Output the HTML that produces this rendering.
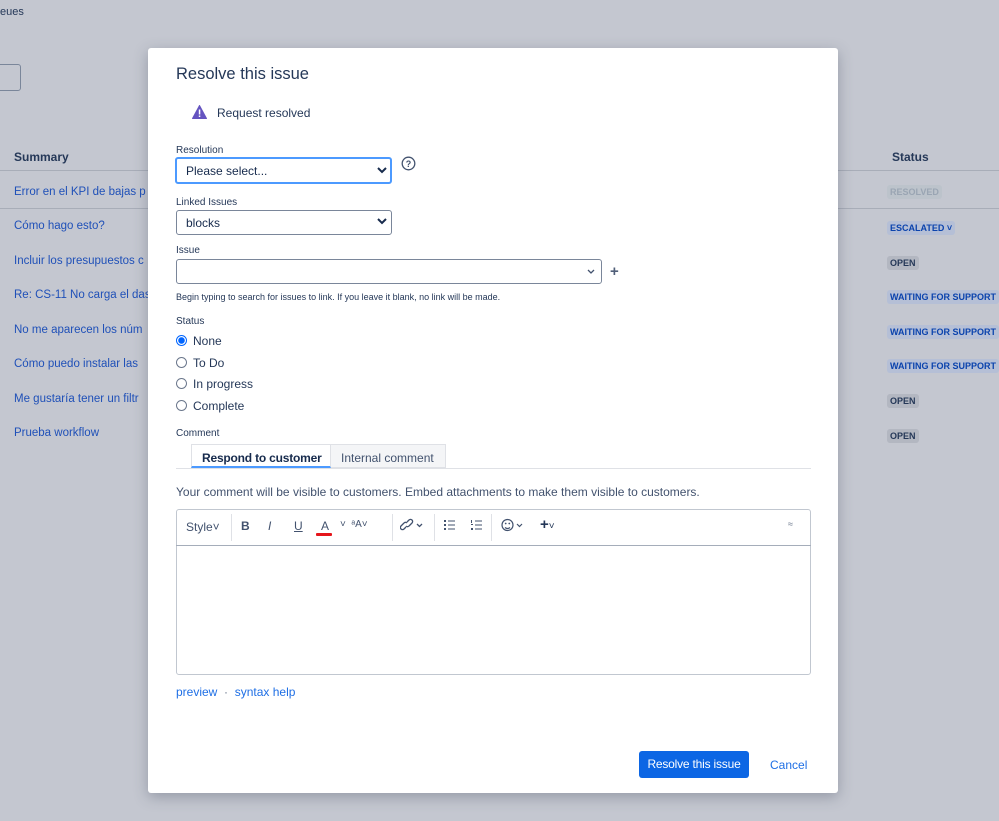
<!DOCTYPE html>
<html><head><meta charset="utf-8"><style>
*{box-sizing:border-box;margin:0;padding:0}
body{width:999px;height:821px;overflow:hidden;background:#c4c7d0;font-family:"Liberation Sans",sans-serif;position:relative;color:#172b4d}
.a{position:absolute;white-space:nowrap}
.lk{color:#1f50b8;font-size:11.5px}
.lz{font-size:9px;font-weight:bold;padding:2px 3px;border-radius:3px}
.op{background:#b3b7c1;color:#253858}
.wt{background:#b5bfd6;color:#0b43ad}
.modal{position:absolute;left:148px;top:48px;width:690px;height:745px;background:#fff;border-radius:3px;box-shadow:0 4px 14px rgba(60,70,90,.35)}
.lab{font-size:10px;color:#253858}
.sel{border:1px solid #7a869a;border-radius:3px;background:#fff;font-size:12px;padding-left:9px;display:flex;align-items:center}
.rad{width:11px;height:11px;border-radius:50%;border:1px solid #6b778c}
.tb{font-size:12px;color:#253858}
</style></head><body>
<div class="a" style="left:0;top:6px;font-size:11px;color:#253858">eues</div>
<div class="a" style="left:-5px;top:64px;width:26px;height:27px;border:1px solid #7a869a;border-radius:3px"></div>
<div class="a" style="left:14px;top:150px;font-size:12px;font-weight:bold;color:#253858">Summary</div>
<div class="a" style="left:0;top:170px;width:999px;border-top:1px solid #a8adb8"></div>
<div class="a" style="left:0;top:208px;width:999px;border-top:1px solid #a8adb8"></div>
<div class="a lk" style="left:14px;top:186px">Error en el KPI de bajas p</div>
<div class="a lk" style="left:14px;top:220px">Cómo hago esto?</div>
<div class="a lk" style="left:14px;top:255px">Incluir los presupuestos c</div>
<div class="a lk" style="left:14px;top:289px">Re: CS-11 No carga el das</div>
<div class="a lk" style="left:14px;top:324px">No me aparecen los núm</div>
<div class="a lk" style="left:14px;top:358px">Cómo puedo instalar las</div>
<div class="a lk" style="left:14px;top:393px">Me gustaría tener un filtr</div>
<div class="a lk" style="left:14px;top:427px">Prueba workflow</div>
<div class="a" style="left:892px;top:150px;font-size:12px;font-weight:bold;color:#253858">Status</div>
<div class="a lz" style="left:887px;top:185px;background:#bcc3cb;color:#9aa5b3">RESOLVED</div>
<div class="a lz wt" style="left:887px;top:221px">ESCALATED ˅</div>
<div class="a lz op" style="left:887px;top:256px">OPEN</div>
<div class="a lz wt" style="left:887px;top:290px">WAITING FOR SUPPORT</div>
<div class="a lz wt" style="left:887px;top:325px">WAITING FOR SUPPORT</div>
<div class="a lz wt" style="left:887px;top:359px">WAITING FOR SUPPORT</div>
<div class="a lz op" style="left:887px;top:394px">OPEN</div>
<div class="a lz op" style="left:887px;top:429px">OPEN</div>

<div class="modal"></div>
<div class="a" style="left:176px;top:65px;font-size:16.5px;color:#253858;font-weight:300">Resolve this issue</div>
<svg class="a" style="left:192px;top:105px" width="15" height="14" viewBox="0 0 15 14"><path d="M7.5 0.5L14.5 13.5H0.5Z" fill="#6554c0" stroke="#6554c0" stroke-linejoin="round"/><rect x="6.8" y="4.5" width="1.5" height="5" fill="#fff"/><rect x="6.8" y="10.5" width="1.5" height="1.5" fill="#fff"/></svg>
<div class="a" style="left:217px;top:106px;font-size:12px;color:#253858">Request resolved</div>

<div class="a lab" style="left:176px;top:145px">Resolution</div>
<div class="a sel" style="left:175px;top:157px;width:217px;height:27px;border:2px solid #4c9aff">Please select...</div>
<svg class="a" style="left:377px;top:167px" width="10" height="7"><path d="M1 1L5 5L9 1" stroke="#172b4d" stroke-width="2" fill="none"/></svg>
<svg class="a" style="left:401px;top:156px" width="15" height="15"><circle cx="7.5" cy="7.5" r="6.3" stroke="#42526e" stroke-width="1.3" fill="none"/><text x="7.5" y="11" font-size="9" text-anchor="middle" font-family="Liberation Sans" fill="#42526e" font-weight="bold">?</text></svg>

<div class="a lab" style="left:176px;top:197px">Linked Issues</div>
<div class="a sel" style="left:176px;top:210px;width:216px;height:25px">blocks</div>
<svg class="a" style="left:377px;top:218px" width="10" height="7"><path d="M1 1L5 5L9 1" stroke="#172b4d" stroke-width="2" fill="none"/></svg>

<div class="a lab" style="left:176px;top:245px">Issue</div>
<div class="a sel" style="left:176px;top:259px;width:426px;height:25px"></div>
<svg class="a" style="left:587px;top:269px" width="8" height="6"><path d="M1 1L4 4L7 1" stroke="#42526e" stroke-width="1.3" fill="none"/></svg>
<div class="a" style="left:610px;top:263px;font-size:15px;font-weight:bold;color:#505f79">+</div>
<div class="a" style="left:176px;top:292px;font-size:9px;color:#253858">Begin typing to search for issues to link. If you leave it blank, no link will be made.</div>

<div class="a lab" style="left:176px;top:316px">Status</div>
<div class="a rad" style="left:176px;top:335px;border:1px solid #0065ff;background:radial-gradient(circle,#0065ff 3px,#fff 3.5px)"></div>
<div class="a tb" style="left:193px;top:334px">None</div>
<div class="a rad" style="left:176px;top:357px"></div><div class="a tb" style="left:193px;top:356px">To Do</div>
<div class="a rad" style="left:176px;top:378px"></div><div class="a tb" style="left:193px;top:377px">In progress</div>
<div class="a rad" style="left:176px;top:400px"></div><div class="a tb" style="left:193px;top:399px">Complete</div>

<div class="a lab" style="left:176px;top:428px">Comment</div>
<div class="a" style="left:191px;top:444px;width:255px;height:24px;border:1px solid #dfe1e6;background:#f4f5f7"></div>
<div class="a" style="left:191px;top:444px;width:140px;height:24px;background:#fff;border:1px solid #dfe1e6;border-bottom:2px solid #4c9aff;font-size:12px;font-weight:bold;padding:6px 0 0 10px;letter-spacing:-0.2px">Respond to customer</div>
<div class="a" style="left:341px;top:451px;font-size:12px;color:#42526e">Internal comment</div>
<div class="a" style="left:176px;top:468px;width:635px;border-top:1px solid #dfe1e6"></div>
<div class="a" style="left:176px;top:485px;font-size:12px;color:#42526e">Your comment will be visible to customers. Embed attachments to make them visible to customers.</div>

<div class="a" style="left:176px;top:509px;width:635px;height:166px;border:1px solid #c1c7d0;border-radius:3px"></div>
<div class="a" style="left:176px;top:545px;width:635px;border-top:1px solid #a5adba"></div>
<div class="a" style="left:186px;top:520px;font-size:12px;color:#42526e">Style˅</div>
<div class="a" style="left:231px;top:514px;height:27px;border-left:1px solid #dfe1e6"></div>
<div class="a" style="left:241px;top:519px;font-size:12px;font-weight:bold;color:#42526e">B</div>
<div class="a" style="left:268px;top:519px;font-size:12px;font-style:italic;color:#42526e">I</div>
<div class="a" style="left:294px;top:519px;font-size:12px;text-decoration:underline;color:#42526e">U</div>
<div class="a" style="left:321px;top:519px;font-size:12px;color:#42526e">A</div>
<div class="a" style="left:316px;top:533px;width:16px;height:3px;background:#e5161b;border-radius:1px"></div>
<div class="a" style="left:340px;top:519px;font-size:10px;color:#42526e">˅ &nbsp;ᵃA˅</div>
<div class="a" style="left:392px;top:514px;height:27px;border-left:1px solid #dfe1e6"></div>
<svg class="a" style="left:400px;top:518px" width="26" height="14"><g stroke="#42526e" stroke-width="1.3" fill="none"><path d="M6 9L4 11a2 2 0 0 1-3-3l3-3a2 2 0 0 1 3 0"/><path d="M7 4l2-2a2 2 0 0 1 3 3l-3 3a2 2 0 0 1-3 0"/><path d="M17 6l2.5 2.5L22 6"/></g></svg>
<div class="a" style="left:434px;top:514px;height:27px;border-left:1px solid #dfe1e6"></div>
<svg class="a" style="left:444px;top:519px" width="40" height="12"><g fill="#42526e"><rect x="0" y="1" width="2" height="2"/><rect x="0" y="5" width="2" height="2"/><rect x="0" y="9" width="2" height="2"/><rect x="4" y="1.5" width="7" height="1"/><rect x="4" y="5.5" width="7" height="1"/><rect x="4" y="9.5" width="7" height="1"/><rect x="27" y="1" width="1" height="3"/><rect x="27" y="5" width="2" height="1"/><rect x="27" y="9" width="2" height="2"/><rect x="31" y="1.5" width="7" height="1"/><rect x="31" y="5.5" width="7" height="1"/><rect x="31" y="9.5" width="7" height="1"/></g></svg>
<div class="a" style="left:491px;top:514px;height:27px;border-left:1px solid #dfe1e6"></div>
<svg class="a" style="left:501px;top:518px" width="24" height="14"><g stroke="#42526e" stroke-width="1.2" fill="none"><circle cx="6.5" cy="7" r="5.5"/><path d="M4 9.5q2.5 2 5 0"/><path d="M16 6l2.5 2.5L21 6"/></g><circle cx="4.7" cy="5.5" r=".9" fill="#42526e"/><circle cx="8.3" cy="5.5" r=".9" fill="#42526e"/></svg>
<div class="a" style="left:540px;top:516px;font-size:15px;font-weight:bold;color:#253858">+<span style="font-size:10px;font-weight:normal">˅</span></div>
<div class="a" style="left:788px;top:519px;font-size:9px;color:#6b778c">≈</div>

<div class="a" style="left:176px;top:685px;font-size:12px;color:#1f6fe5">preview &nbsp;<span style="color:#6b778c">·</span>&nbsp; syntax help</div>
<div class="a" style="left:639px;top:751px;width:110px;height:27px;background:#0c66e4;border-radius:3px;color:#fff;font-size:12px;text-align:center;line-height:27px;letter-spacing:-0.2px">Resolve this issue</div>
<div class="a" style="left:770px;top:758px;font-size:12px;color:#1f6fe5">Cancel</div>
</body></html>
